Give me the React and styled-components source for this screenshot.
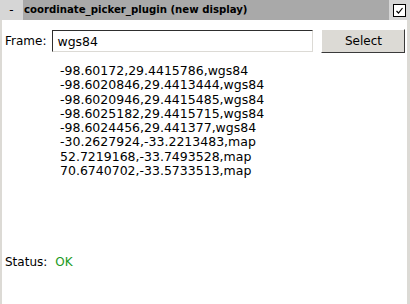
import React from "react";
import styled, { createGlobalStyle } from "styled-components";

const Global = createGlobalStyle`
  html, body { margin: 0; padding: 0; background: #ffffff; }
  body { font-family: "DejaVu Sans", "Liberation Sans", sans-serif; }
`;

const Window = styled.div`
  width: 410px;
  height: 304px;
  box-sizing: border-box;
  display: flex;
  flex-direction: column;
  background: #ffffff;
  color: #000;
  font-size: 12px;
`;

const TitleBar = styled.div`
  display: flex;
  height: 20px;
  flex-shrink: 0;
`;

const TitleSide = styled.div`
  width: ${(p) => p.$w}px;
  background: #d6d6d6;
  display: flex;
  align-items: center;
  justify-content: center;
`;

const TitleText = styled.div`
  flex: 1;
  background: #a9a9a9;
  font-family: "DejaVu Sans Condensed", "DejaVu Sans", sans-serif;
  font-stretch: condensed;
  font-weight: bold;
  font-size: 11.3px;
  line-height: 20px;
  padding-left: 1px;
  color: #000;
  white-space: nowrap;
`;

const CheckBox = styled.div`
  width: 13px;
  height: 13px;
  box-sizing: border-box;
  border: 1px solid #000;
  background: #fff;
  display: flex;
  align-items: center;
  justify-content: center;
`;

const Body = styled.div`
  flex: 1;
  display: flex;
  flex-direction: column;
  border-left: 2px solid #dcdad5;
  border-right: 3px solid #dcdad5;
`;

const FrameRow = styled.div`
  display: flex;
  align-items: center;
  padding: 9px 0 0 3px;
`;

const Label = styled.span`
  font-size: 12px;
  color: ${(p) => p.$color || "#000"};
  margin-right: ${(p) => p.$mr || 0}px;
`;

const Input = styled.div`
  width: 261px;
  height: 22px;
  box-sizing: border-box;
  border-top: 1px solid #2e2e2e;
  border-left: 1px solid #2e2e2e;
  border-right: 1px solid #dcdad5;
  border-bottom: 1px solid #dcdad5;
  padding-left: 4px;
  display: flex;
  align-items: center;
  font-size: 12.5px;
  margin-left: 6px;
`;

const Button = styled.div`
  width: 84px;
  height: 24px;
  box-sizing: border-box;
  margin-left: 8px;
  background: #dcdad5;
  border-top: 1px solid #ffffff;
  border-left: 1px solid #ffffff;
  border-right: 1px solid #3a3a3a;
  border-bottom: 1px solid #3a3a3a;
  display: flex;
  align-items: center;
  justify-content: center;
  font-size: 12px;
`;

const List = styled.div`
  margin: 11px 0 0 58px;
  display: flex;
  flex-direction: column;
`;

const Line = styled.div`
  font-size: 12.5px;
  line-height: 14.3px;
  white-space: nowrap;
`;

const Spacer = styled.div`
  flex: 1;
`;

const StatusRow = styled.div`
  display: flex;
  align-items: center;
  padding-left: 3px;
  margin-bottom: 34px;
  line-height: 16px;
`;

const lines = [
  "-98.60172,29.4415786,wgs84",
  "-98.6020846,29.4413444,wgs84",
  "-98.6020946,29.4415485,wgs84",
  "-98.6025182,29.4415715,wgs84",
  "-98.6024456,29.441377,wgs84",
  "-30.2627924,-33.2213483,map",
  "52.7219168,-33.7493528,map",
  "70.6740702,-33.5733513,map",
];

export default function App() {
  return (
    <>
      <Global />
      <Window>
        <TitleBar>
          <TitleSide $w={23}>-</TitleSide>
          <TitleText>coordinate_picker_plugin (new display)</TitleText>
          <TitleSide $w={21}>
            <CheckBox>
              <svg width="11" height="11" viewBox="0 0 11 11">
                <path d="M2.5 6 L4.5 8 L8.5 3" fill="none" stroke="#000" strokeWidth="1.2" />
              </svg>
            </CheckBox>
          </TitleSide>
        </TitleBar>
        <Body>
          <FrameRow>
            <Label>Frame:</Label>
            <Input>wgs84</Input>
            <Button>Select</Button>
          </FrameRow>
          <List>
            {lines.map((l) => (
              <Line key={l}>{l}</Line>
            ))}
          </List>
          <Spacer />
          <StatusRow>
            <Label $mr={8}>Status:</Label>
            <Label $color="#1c9a1c">OK</Label>
          </StatusRow>
        </Body>
      </Window>
    </>
  );
}
